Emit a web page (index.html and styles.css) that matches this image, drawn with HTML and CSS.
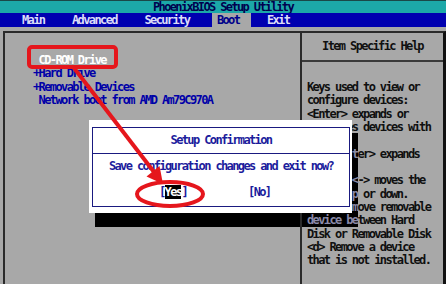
FILE: index.html
```html
<!DOCTYPE html>
<html lang="en">
<head>
  <meta charset="UTF-8">
  <meta name="viewport" content="width=device-width, initial-scale=1.0">
  <title>PhoenixBIOS Setup Utility</title>
  <link rel="stylesheet" href="styles.css">
</head>
<body>
  <div class="screen">
    <header class="title">PhoenixBIOS Setup Utility</header>
    <nav class="menu">
      <span class="menu-item">Main</span>
      <span class="menu-item">Advanced</span>
      <span class="menu-item">Security</span>
      <span class="menu-item active">Boot</span>
      <span class="menu-item">Exit</span>
    </nav>
    <div class="frame">
      <section class="boot-list">
        <div class="row current"> CD-ROM Drive</div>
        <div class="row">+Hard Drive</div>
        <div class="row">+Removable Devices</div>
        <div class="row"> Network boot from AMD Am79C970A</div>
      </section>
      <aside class="help">
        <div class="help-title">Item Specific Help</div>
        <div class="help-text">
          <div>Keys used to view or</div>
          <div>configure devices:</div>
          <div>&lt;Enter&gt; expands or</div>
          <div>collapses devices with</div>
          <div>a + or -</div>
          <div>&lt;Ctrl+En<span class="shade">t</span>er&gt; expands</div>
          <div>all</div>
          <div>&lt;+&gt; and <span class="shade">&lt;</span>-&gt; moves the</div>
          <div>device u<span class="shade">p</span> or down.</div>
          <div>&lt;n&gt; May <span class="shade">m</span>ove removable</div>
          <div><span class="shade">device be</span>tween Hard</div>
          <div>Disk or Removable Disk</div>
          <div>&lt;d&gt; Remove a device</div>
          <div>that is not installed.</div>
        </div>
      </aside>
    </div>
    <div class="shadow"></div>
    <div class="dialog">
      <div class="dialog-box">
        <div class="dialog-title">Setup Confirmation</div>
        <div class="dialog-msg">Save configuration changes and exit now?</div>
        <div class="dialog-buttons">
          <span>[<span class="sel">Yes</span>]</span>
          <span>[No]</span>
        </div>
      </div>
    </div>
    <svg class="marks" width="446" height="284" viewBox="0 0 446 284">
      <rect x="29" y="47" width="87" height="20" rx="3" fill="none" stroke="#e5161c" stroke-width="4"/>
      <line x1="74" y1="68" x2="154" y2="172" stroke="#e5161c" stroke-width="4"/>
      <polygon points="163,184 146.5,176.5 159.5,166" fill="#e5161c"/>
      <ellipse cx="170" cy="194" rx="33" ry="12" fill="none" stroke="#e5161c" stroke-width="4"/>
    </svg>
  </div>
</body>
</html>
```

FILE: styles.css
```css
body {
  margin: 0;
  background-color: #a8a8a8;
  font-family: "DejaVu Sans Mono", "Liberation Mono", monospace;
  font-size: 12px;
  font-weight: bold;
  letter-spacing: -1.62px;
}
.screen {
  position: relative;
  width: 446px;
  height: 284px;
  overflow: hidden;
  display: flex;
  flex-direction: column;
}
.title {
  height: 12px;
  line-height: 12px;
  border-top: 1px solid #1a4848;
  background-color: #1ca8a8;
  color: #00004e;
  text-align: center;
}
.menu {
  display: flex;
  gap: 11px;
  height: 14px;
  line-height: 14px;
  padding-left: 17px;
  background-color: #0000b0;
}
.menu-item {
  padding: 0 11.6px 0 5px;
  color: #dcdcf8;
}
.menu-item.active {
  background-color: #a8a8a8;
  color: #00008a;
}
.frame {
  flex: 1;
  display: grid;
  grid-template-columns: 295px 1fr;
  margin: 4px 0 0 3px;
  border-top: 2px solid #2a2a2a;
  border-left: 2px solid #2a2a2a;
  border-right: 3px solid #111;
}
.boot-list {
  padding: 21px 0 0 28px;
}
.row {
  white-space: pre;
  line-height: 13.4px;
  color: #0000a8;
}
.row.current {
  color: #ffffff;
}
.help {
  position: relative;
  z-index: 2;
  border-left: 2px solid #2a2a2a;
  color: #101010;
}
.help-title {
  height: 27px;
  line-height: 27px;
  text-align: center;
  border-bottom: 2px solid #3a3a3a;
}
.help-text {
  padding: 19px 0 0 5px;
  line-height: 13.33px;
}
.help-text div {
  white-space: nowrap;
}
.shade {
  color: #8a8aa8;
}
.shadow {
  position: absolute;
  z-index: 1;
  left: 95px;
  top: 133px;
  width: 263px;
  height: 94px;
  background-color: #000;
}
.dialog {
  position: absolute;
  z-index: 3;
  left: 89px;
  top: 120px;
  width: 263px;
  height: 93px;
  box-sizing: border-box;
  padding: 7px 2px 6px 3px;
  background-color: #fff;
  color: #1c1c9c;
}
.dialog-box {
  height: 100%;
  box-sizing: border-box;
  border: 1px solid #1a1a80;
}
.dialog-title {
  height: 25px;
  line-height: 25px;
  text-align: center;
  border-bottom: 1px solid #1a1a80;
}
.dialog-msg {
  margin-top: 6px;
  line-height: 13.4px;
  text-align: center;
}
.dialog-buttons {
  display: flex;
  gap: 61px;
  margin-top: 12.6px;
  padding-left: 66px;
  line-height: 13.4px;
}
.sel {
  background-color: #000;
  color: #fff;
}
.marks {
  position: absolute;
  z-index: 5;
  left: 0;
  top: 0;
  pointer-events: none;
}
```
